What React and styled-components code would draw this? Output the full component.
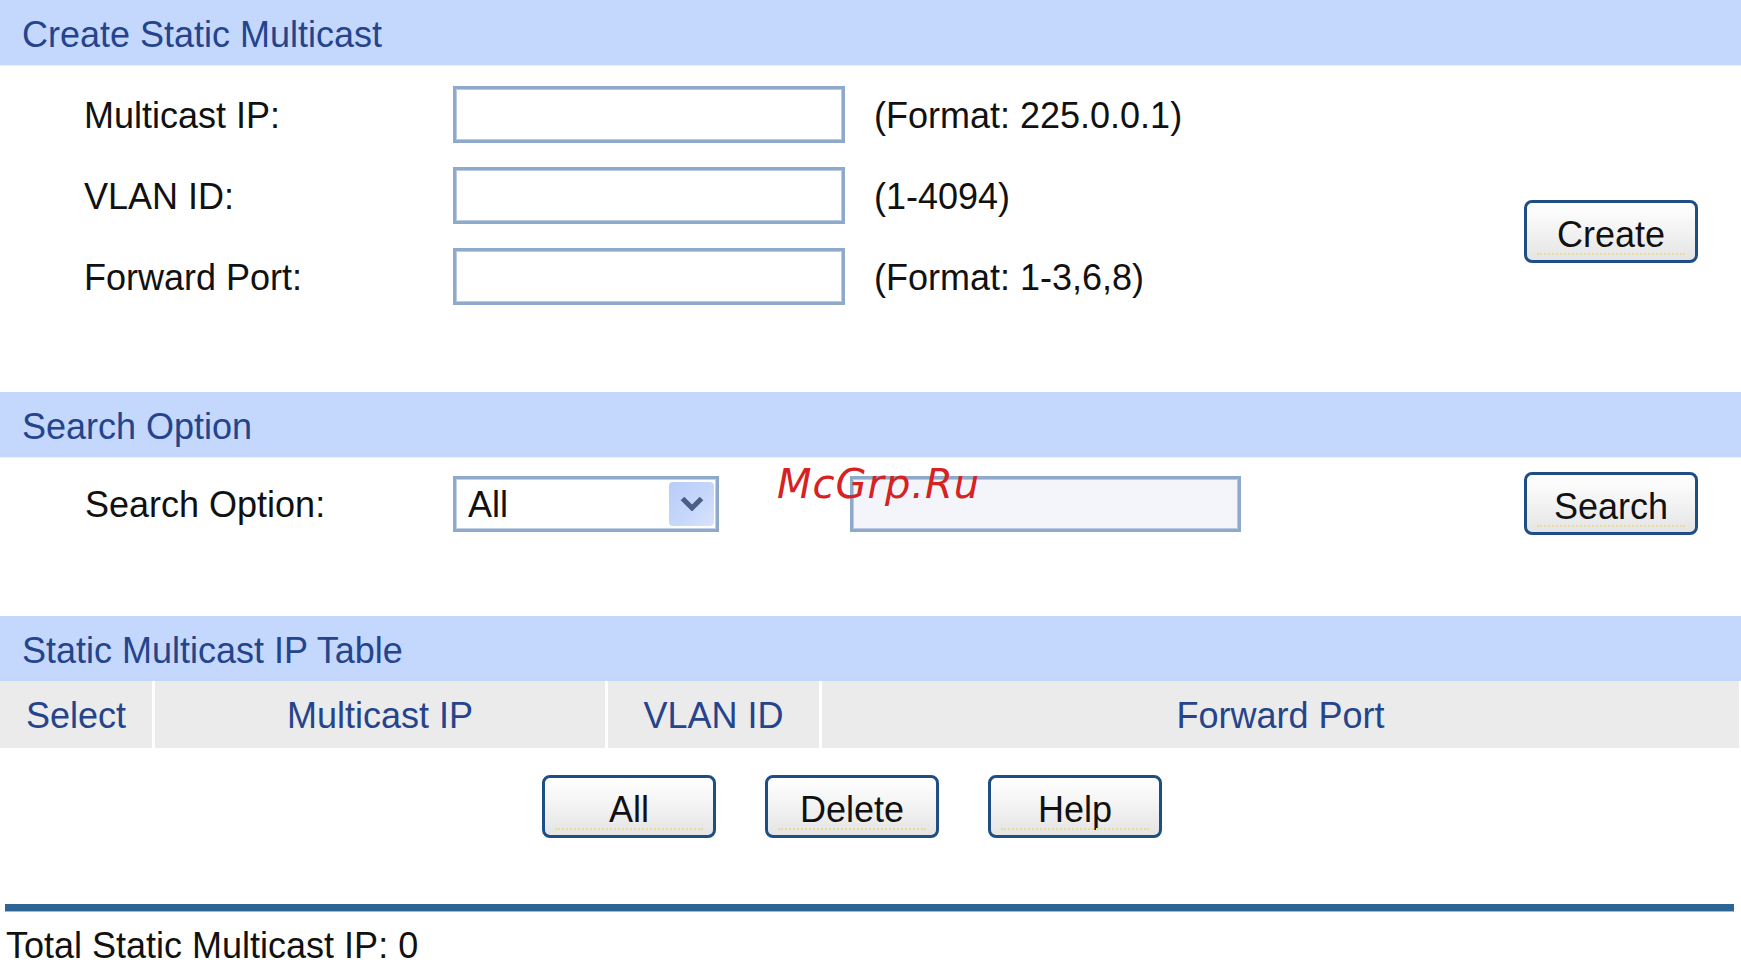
import React from "react";
import styled, { createGlobalStyle } from "styled-components";

const GlobalStyle = createGlobalStyle`
  html, body { margin: 0; padding: 0; background: #ffffff; }
  body { font-family: "Liberation Sans", Arial, sans-serif; color: #111; }
  * { box-sizing: border-box; }
`;

const Page = styled.div`
  position: relative;
  width: 1741px;
  height: 964px;
  overflow: hidden;
  background: #fff;
`;

const SectionHeader = styled.div`
  height: 65px;
  display: flex;
  align-items: center;
  padding: 4px 0 0 22px;
  background: #c4d8fd;
  box-shadow: 0 1px 0 #e8effc;
  color: #25448c;
  font-size: 36px;
`;

const CreateBody = styled.div`
  display: flex;
  padding: 21px 43px 87px 84px;
`;

const FormGrid = styled.div`
  display: grid;
  grid-template-columns: 369px 392px auto;
  grid-auto-rows: 57px;
  row-gap: 24px;
  align-items: center;
`;

const Label = styled.div`
  font-size: 36px;
  padding-top: 2px;
  color: #111;
`;

const TextInput = styled.div`
  height: ${(p) => p.$h || 57}px;
  width: ${(p) => p.$w || 392}px;
  border: 3px solid #8ea9c9;
  box-shadow: inset 0 0 0 1px #b9cbe0;
  background: ${(p) => p.$bg || "#ffffff"};
`;

const Hint = styled.div`
  padding: 2px 0 0 29px;
  font-size: 36px;
  color: #111;
`;

const Side = styled.div`
  margin-left: auto;
  padding-top: ${(p) => p.$top || 0}px;
`;

const Button = styled.button`
  position: relative;
  width: ${(p) => p.$w || 174}px;
  height: ${(p) => p.$h || 63}px;
  border: 3px solid #1f4e84;
  border-radius: 8px;
  background: linear-gradient(#ffffff 0%, #f4f4f4 45%, #e4e4e4 100%);
  font-family: "Liberation Sans", Arial, sans-serif;
  font-size: 36px;
  color: #111;
  padding: 6px 0 0;
  cursor: pointer;
  &::after {
    content: "";
    position: absolute;
    left: 10px;
    right: 10px;
    bottom: 5px;
    border-bottom: 2px dotted #eadc94;
  }
`;

const SearchBody = styled.div`
  display: flex;
  align-items: center;
  padding: 15px 43px 81px 85px;
`;

const SearchLabel = styled(Label)`
  width: 368px;
`;

const Select = styled.div`
  width: 266px;
  height: 56px;
  border: 3px solid #8ea9c9;
  box-shadow: inset 0 0 0 1px #c2d1e3;
  background: #fff;
  display: flex;
  align-items: center;
  padding: 0 2px 0 12px;
  font-size: 36px;
`;

const SelectValue = styled.span`
  flex: 1;
  padding-top: 3px;
`;

const ArrowBox = styled.span`
  width: 45px;
  height: 44px;
  border-radius: 4px;
  background: linear-gradient(135deg, #b8ccfa 0%, #c8d8fc 60%, #d8e4fd 100%);
  display: flex;
  align-items: center;
  justify-content: center;
`;

const SearchGap = styled.div`
  width: 131px;
`;

const TableHead = styled.div`
  display: grid;
  grid-template-columns: 152px 450px 211px 1fr;
  column-gap: 3px;
  padding-right: 2px;
  background: #ffffff;
`;

const HeadCell = styled.div`
  height: 67px;
  background: #ebebeb;
  display: flex;
  align-items: center;
  justify-content: center;
  padding-top: 3px;
  color: #25448c;
  font-size: 36px;
`;

const ButtonRow = styled.div`
  display: flex;
  gap: 49px;
  padding: 27px 0 0 542px;
  height: 156px;
`;

const Rule = styled.div`
  margin: 0 7px 0 5px;
  height: 7px;
  background: #2c6596;
  box-shadow: 0 1px 0 #9dbad3;
`;

const Total = styled.div`
  margin-top: 15px;
  padding-left: 6px;
  font-size: 36px;
  line-height: 40px;
  color: #111;
`;

const Watermark = styled.div`
  position: absolute;
  left: 777px;
  top: 464px;
  font-family: "DejaVu Sans", sans-serif;
  font-style: italic;
  font-size: 40px;
  line-height: 40px;
  letter-spacing: 1px;
  color: #d62222;
  pointer-events: none;
`;

const rows = [
  { label: "Multicast IP:", hint: "(Format: 225.0.0.1)" },
  { label: "VLAN ID:", hint: "(1-4094)" },
  { label: "Forward Port:", hint: "(Format: 1-3,6,8)" },
];

export default function App() {
  return (
    <Page>
      <GlobalStyle />
      <SectionHeader>Create Static Multicast</SectionHeader>
      <CreateBody>
        <FormGrid>
          {rows.map((r) => (
            <React.Fragment key={r.label}>
              <Label>{r.label}</Label>
              <TextInput />
              <Hint>{r.hint}</Hint>
            </React.Fragment>
          ))}
        </FormGrid>
        <Side $top={114}>
          <Button>Create</Button>
        </Side>
      </CreateBody>

      <SectionHeader>Search Option</SectionHeader>
      <SearchBody>
        <SearchLabel>Search Option:</SearchLabel>
        <Select>
          <SelectValue>All</SelectValue>
          <ArrowBox>
            <svg width="24" height="15" viewBox="0 0 24 15">
              <path d="M2.5 2.5 L12 12 L21.5 2.5" fill="none" stroke="#4a5e86" strokeWidth="5" strokeLinejoin="miter" />
            </svg>
          </ArrowBox>
        </Select>
        <SearchGap />
        <TextInput $w={391} $h={56} $bg="#f4f5fa" />
        <Side>
          <Button>Search</Button>
        </Side>
      </SearchBody>

      <SectionHeader>Static Multicast IP Table</SectionHeader>
      <TableHead>
        <HeadCell>Select</HeadCell>
        <HeadCell>Multicast IP</HeadCell>
        <HeadCell>VLAN ID</HeadCell>
        <HeadCell>Forward Port</HeadCell>
      </TableHead>
      <ButtonRow>
        <Button>All</Button>
        <Button>Delete</Button>
        <Button>Help</Button>
      </ButtonRow>
      <Rule />
      <Total>Total Static Multicast IP: 0</Total>

      <Watermark>McGrp.Ru</Watermark>
    </Page>
  );
}
